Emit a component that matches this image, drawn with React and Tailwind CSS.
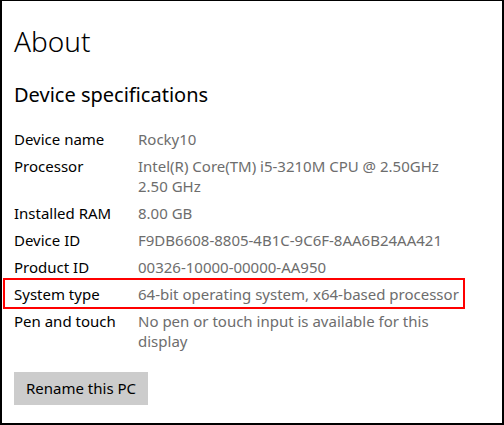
import React from "react";

const rows = [
  ["Device name", ["Rocky10"]],
  ["Processor", ["Intel(R) Core(TM) i5-3210M CPU @ 2.50GHz", "2.50 GHz"]],
  ["Installed RAM", ["8.00 GB"]],
  ["Device ID", ["F9DB6608-8805-4B1C-9C6F-8AA6B24AA421"]],
  ["Product ID", ["00326-10000-00000-AA950"]],
  ["System type", ["64-bit operating system, x64-based processor"], true],
  ["Pen and touch", ["No pen or touch input is available for this", "display"]],
];

export default function App() {
  return (
    <div
      className="w-[504px] h-[425px] bg-white border-l-2 border-t border-r-2 border-b-2 border-black overflow-hidden"
      style={{ fontFamily: '"Noto Sans", "Open Sans", sans-serif' }}
    >
      <div className="pl-[12px] pt-[22px]">
        <h1 className="text-[28px] leading-[36px] font-light text-black">About</h1>
        <h2 className="mt-[22px] text-[20px] leading-[28px] font-normal text-black">Device specifications</h2>
        <div className="mt-[20px] flex flex-col gap-[7px]">
          {rows.map(([label, vals, hl]) => (
            <div key={label} className="relative flex text-[15px] leading-[20px]">
              {hl && (
                <div className="absolute left-[-11px] top-[-6px] w-[462px] h-[31px] border-2 border-[#ff0000]" />
              )}
              <div className="w-[124px] shrink-0 text-black">{label}</div>
              <div className="text-[#6d6d6d]">
                {vals.map((v) => (
                  <div key={v}>{v}</div>
                ))}
              </div>
            </div>
          ))}
        </div>
        <button className="mt-[21px] w-[134px] h-[33px] bg-[#cccccc] text-black text-[15px]">
          Rename this PC
        </button>
      </div>
    </div>
  );
}
